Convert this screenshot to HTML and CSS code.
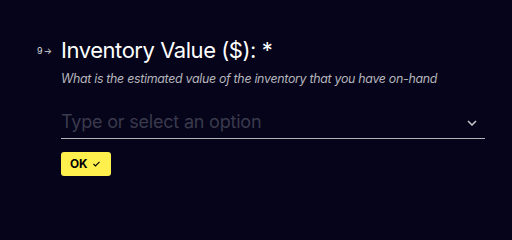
FILE: index.html
```html
<!DOCTYPE html>
<html>
<head>
<meta charset="utf-8">
<link rel="stylesheet" href="styles.css">
</head>
<body>
<div class="page">
  <div class="question">
    <div class="num"><span>9</span><span class="arrow">→</span></div>
    <div class="content">
      <h1 class="title">Inventory Value ($): *</h1>
      <p class="desc">What is the estimated value of the inventory that you have on-hand</p>
      <div class="field">
        <span class="placeholder">Type or select an option</span>
        <svg class="chev" width="10" height="6" viewBox="0 0 10 6"><path d="M1 1 L5 5 L9 1" fill="none" stroke="#c8c8cc" stroke-width="1.5"/></svg>
      </div>
      <button class="ok">OK <svg class="check" width="7" height="6" viewBox="0 0 7 6"><path d="M0.5 3 L2.5 5 L6.5 0.8" fill="none" stroke="#000" stroke-width="1.1"/></svg></button>
    </div>
  </div>
</div>
</body>
</html>
```
FILE: styles.css
```css
html, body { margin: 0; padding: 0; }
body {
  background: #05041a;
  width: 512px;
  height: 231px;
  overflow: hidden;
  font-family: Inter, "Noto Sans", sans-serif;
}
.page { padding: 36px 27px 0 37px; }
.question { display: flex; align-items: flex-start; }
.num {
  width: 24px;
  height: 28px;
  font-size: 9px;
  color: #d8d8dc;
  display: flex;
  align-items: center;
}
.arrow { font-size: 9px; margin-left: 1px; }
.content { flex: 1; }
.title {
  margin: 0;
  font-size: 22px;
  font-weight: 400;
  color: #ffffff;
  line-height: 28px;
  letter-spacing: -0.45px;
}
.desc {
  margin: 7px 0 0;
  font-size: 12.4px;
  font-style: italic;
  color: #b5b5bb;
  line-height: 16px;
  letter-spacing: -0.3px;
}
.field {
  margin-top: 22px;
  display: flex;
  align-items: center;
  justify-content: space-between;
  border-bottom: 1.5px solid #b2b2b6;
  padding-bottom: 2.5px;
}
.placeholder {
  font-size: 18px;
  color: #3a3a4c;
  line-height: 26px;
  letter-spacing: -0.2px;
}
.chev { margin-right: 8px; margin-top: 2px; }
.ok {
  margin-top: 13px;
  background: #fff04d;
  border: none;
  border-radius: 3px;
  height: 24px;
  padding: 0 11px 0 9px;
  font-family: Inter, sans-serif;
  font-weight: 700;
  font-size: 11.8px;
  color: #000;
  display: flex;
  align-items: center;
  gap: 5px;
}
```
